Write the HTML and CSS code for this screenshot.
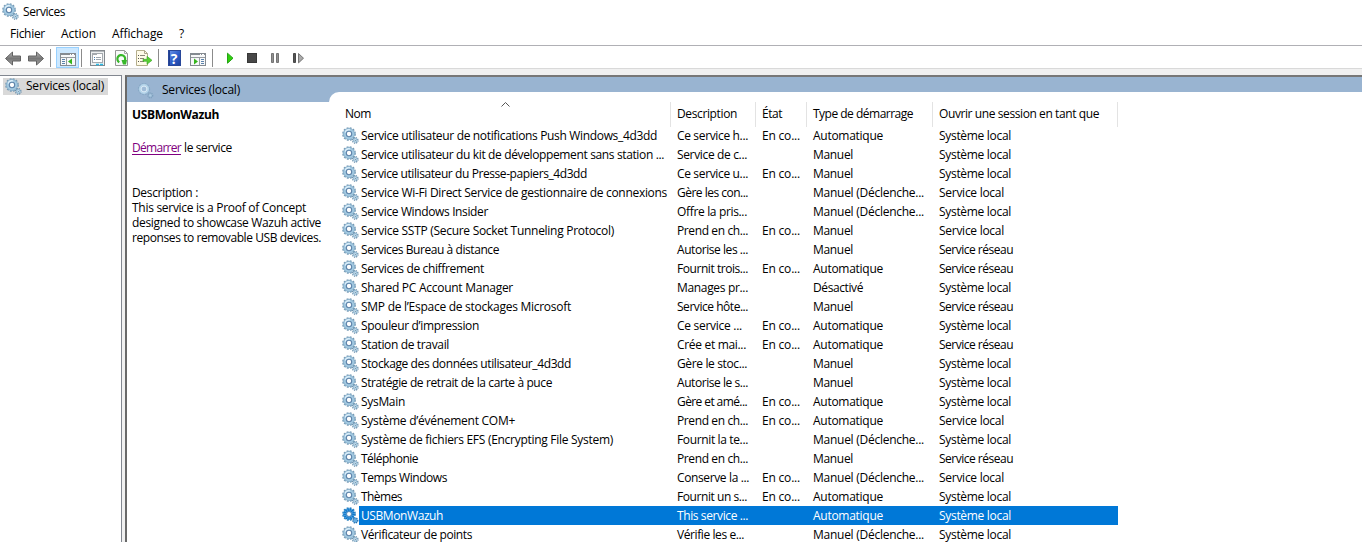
FILE: index.html
```html
<!DOCTYPE html>
<html lang="fr">
<head>
<meta charset="utf-8">
<title>Services</title>
<link rel="stylesheet" href="styles.css">
</head>
<body>
<svg class="defs" width="0" height="0">
  <defs>
    <linearGradient id="arrowFill" x1="0" y1="0" x2="0" y2="1"><stop offset="0" stop-color="#b5b5b5"/><stop offset=".5" stop-color="#777"/><stop offset="1" stop-color="#a5a5a5"/></linearGradient>
    <linearGradient id="helpFill" x1="0" y1="0" x2="1" y2="1"><stop offset="0" stop-color="#6f97e8"/><stop offset=".5" stop-color="#2f5fcb"/><stop offset="1" stop-color="#1c3f9c"/></linearGradient>
    <symbol id="gear" viewBox="0 0 17 17">
      <circle cx="7" cy="7" r="5.9" fill="none" stroke="#7398b3" stroke-width="1.9" stroke-dasharray="1.85 1.24"/>
      <circle cx="7" cy="7" r="4.2" fill="none" stroke="#a3cae2" stroke-width="3.2"/>
      <circle cx="7" cy="7" r="5.5" fill="none" stroke="#82a9c5" stroke-width=".7"/>
      <path d="M3.200 5.500A4.100 4.100 0 0 1 8 3" fill="none" stroke="#dceffa" stroke-width="1.400"/>
      <circle cx="7" cy="7" r="2.700" fill="#fff" stroke="#5f84aa" stroke-width="1.100"/>
      <circle cx="13.300" cy="13.400" r="2.700" fill="none" stroke="#668ba8" stroke-width="1.400" stroke-dasharray="1.200 .92"/>
      <circle cx="13.300" cy="13.400" r="1.700" fill="#eef7fc" stroke="#91b9d3" stroke-width="1.200"/>
      <circle cx="13.300" cy="13.400" r=".6" fill="#6388a5"/>
    </symbol>
    <symbol id="gearpale" viewBox="0 0 17 17">
      <circle cx="7" cy="7" r="5.400" fill="none" stroke="#86a9c6" stroke-width="1.500" stroke-dasharray="1.600 1.230"/>
      <circle cx="7" cy="7" r="4" fill="none" stroke="#b5d5ea" stroke-width="2"/>
      <circle cx="7" cy="7" r="2.900" fill="#9fbbd7" stroke="#e3f2fb" stroke-width=".9"/>
      <circle cx="13.300" cy="13.400" r="2.300" fill="none" stroke="#7fa2bf" stroke-width="1.500" stroke-dasharray="1.100 .7"/>
      <circle cx="13.300" cy="13.400" r="1.200" fill="#a9cbe2"/>
    </symbol>
    <symbol id="gearsel" viewBox="0 0 17 17">
      <circle cx="7" cy="7" r="5.900" fill="none" stroke="#287fbd" stroke-width="1.900" stroke-dasharray="1.850 1.240"/>
      <circle cx="7" cy="7" r="4.200" fill="none" stroke="#4b9fdd" stroke-width="3.200"/>
      <circle cx="7" cy="7" r="4.200" fill="none" stroke="#0873c9" stroke-width="3" stroke-dasharray="1 1"/>
      <circle cx="7" cy="7" r="2.500" fill="#fff" stroke="#226cad" stroke-width=".8"/>
      <circle cx="13.300" cy="13.400" r="2.500" fill="#65ace0" stroke="#216eae" stroke-width="1.300" stroke-dasharray="1.200 .9"/>
    </symbol>
  </defs>
</svg>
<div class="window">
  <header class="titlebar"><svg class="gear"><use href="#gear"/></svg><span data-w="42">Services</span></header>
  <nav class="menu">
    <span class="m1" data-w="35">Fichier</span><span class="m2" data-w="35">Action</span><span class="m3" data-w="51">Affichage</span><span>?</span>
  </nav>
  <div class="toolbar">
    <svg width="362" height="22" viewBox="0 46 362 22">
      <g fill="url(#arrowFill)" stroke="#626262" stroke-width="1" stroke-linejoin="round">
        <path d="M5.500 58.500l7-6.500v4h8v5h-8v4z"/><path d="M43.500 58.500l-7-6.500v4h-8v5h8v4z"/>
      </g>
      <path d="M50.500 49v18M81.500 49v18M158.500 49v18M212.500 49v18" stroke="#8b8b8b"/>
      <rect x="56.500" y="47.500" width="22" height="20" fill="#cce8ff" stroke="#99d1ff"/>
      <g>
        <rect x="60.500" y="53.500" width="15" height="12" fill="#f7f8f9" stroke="#858b91"/>
        <path d="M61 54.500h14" stroke="#858b91"/><path d="M70 54.500h1M72 54.500h2" stroke="#fff"/>
        <path d="M61 57.500h14M66.500 58v7" stroke="#969ba0"/>
        <path d="M62 59.500h3M62 61.500h3M62 63.500h3" stroke="#5c83ac"/><path d="M72 58.500v6l-4-3z" fill="#35b51c"/>
      </g>
      <g>
        <rect x="90.500" y="50.500" width="14" height="15" fill="#eef0f1" stroke="#84898e"/>
        <path d="M91 51.500h13" stroke="#b3b8bc"/>
        <rect x="92.500" y="53.500" width="10" height="9" fill="#fff" stroke="#a4a9ae"/>
        <path d="M93 54.500h4" stroke="#a4a9ae"/>
        <path d="M94 57.500h1M94 59.500h1" stroke="#4a7eb0"/><path d="M96 57.500h5M96 59.500h5" stroke="#a0a8b0"/>
        <path d="M96 64.500h3M100 64.500h3" stroke="#2bbce8" stroke-width="1.500"/>
      </g>
      <g>
        <path d="M115.500 50.500h9l3 3v12h-12z" fill="#f9fafa" stroke="#969696"/><path d="M124.500 50.500v3h3" fill="none" stroke="#aaa"/>
        <path d="M119.300 62.300A3.900 3.900 0 1 1 124.600 61" fill="none" stroke="#38b72a" stroke-width="2.200"/><path d="M121.500 60h5.500l-1 4.500h-3z" fill="#38b72a"/>
      </g>
      <g>
        <path d="M136.500 50.500h8l3 3v12h-11z" fill="#fffbe8" stroke="#b5ae8c"/><path d="M144.500 50.500v3h3" fill="none" stroke="#aaa38a"/>
        <path d="M138 55.500h1M138 58.500h1M138 61.500h1" stroke="#555"/><path d="M140 55.500h5M140 58.500h4M140 61.500h4" stroke="#8a8778"/>
        <path d="M143 59.300h4v-3l5 4-5 4v-3h-4z" fill="#58cf32" stroke="#37a325" stroke-width=".6"/>
      </g>
      <rect x="168.500" y="50.500" width="12" height="15" fill="url(#helpFill)" stroke="#28479a"/>
      <path d="M169.500 51v14" stroke="#1f3f92"/>
      <text x="170.700" y="63.500" class="help">?</text>
      <g>
        <rect x="190.500" y="53.500" width="15" height="12" fill="#f7f8f9" stroke="#858b91"/>
        <path d="M191 54.500h14" stroke="#858b91"/><path d="M200 54.500h1M202 54.500h2" stroke="#fff"/>
        <path d="M191 57.500h14M199.500 58v7" stroke="#969ba0"/>
        <path d="M201 59.500h3M201 61.500h3M201 63.500h3" stroke="#5c83ac"/><path d="M194 58.500v6l4-3z" fill="#35b51c"/>
      </g>
      <path d="M227.500 53.200l5.500 5-5.500 5z" fill="#2fd00d" stroke="#26a316"/>
      <rect x="247.500" y="53.500" width="9" height="9" fill="#474747" stroke="#383838"/>
      <path d="M271.500 53.500h2v9h-2zM276.500 53.500h2v9h-2z" fill="#909090" stroke="#747474"/>
      <path d="M293.500 53.500h2v9h-2z" fill="#555" stroke="#484848"/><path d="M298.500 53.500l5 4.700-5 4.700z" fill="#aaa" stroke="#777"/>
    </svg>
  </div>
  <div class="body">
    <aside class="tree"><div class="node"><svg class="gear"><use href="#gear"/></svg><span data-w="78">Services (local)</span></div></aside>
    <main class="pane">
      <section class="info">
        <div class="banner"><svg class="gear"><use href="#gearpale"/></svg><span data-w="78">Services (local)</span></div>
        <div class="details">
          <h1><span data-w="87">USBMonWazuh</span></h1>
          <p class="action"><a href="#" data-w="49">Démarrer</a><span data-w="48">le service</span></p>
          <p class="desc"><span data-w="66">Description :</span><span data-w="174">This service is a Proof of Concept</span><span data-w="189">designed to showcase Wazuh active</span><span data-w="189">reponses to removable USB devices.</span></p>
        </div>
      </section>
      <section class="list">
        <div class="head">
          <div><span data-w="26">Nom</span><svg class="sort" width="9" height="5"><path d="M.5 4.500l4-4 4 4" fill="none" stroke="#555"/></svg></div>
          <div><span data-w="60">Description</span></div><div><span data-w="20">État</span></div><div><span data-w="100">Type de démarrage</span></div><div><span data-w="160">Ouvrir une session en tant que</span></div>
        </div>
        <div id="rows"></div>
      </section>
    </main>
  </div>
</div>
<script src="script.js"></script>
</body>
</html>
```
FILE: styles.css
```css
* { box-sizing: border-box; }
body { margin: 0; background: #fff; color: #000; font: 12px/15px "Open Sans", "Noto Sans", sans-serif; overflow: hidden; }
.defs { position: absolute; }
.window { height: 542px; display: flex; flex-direction: column; overflow: hidden; }
span, a { white-space: pre; }
.gear { width: 17px; height: 17px; flex: none; }
.titlebar { height: 24px; padding: 3px 0 0 2px; display: flex; gap: 4px; }
.titlebar span { padding-top: 1px; }
.menu { height: 22px; display: flex; padding: 2px 0 0 10px; border-bottom: 1px solid #b0b0b5; }
.m1 { margin-right: 16px; }
.m2 { margin-right: 16px; }
.m3 { margin-right: 16px; }
.toolbar { height: 23px; border-bottom: 1px solid #d9d9d9; flex: none; }
.toolbar svg { display: block; }
.help { font: bold 14px "Open Sans", sans-serif; fill: #fff; }
.body { flex: 1; min-height: 0; background: #f0f0f0; padding-top: 6px; display: flex; gap: 3px; }
.tree { width: 122px; background: #fff; border: solid #828790; border-width: 1px 1px 0 0; padding: 2px 0 0 3px; }
.node { width: 105px; height: 17px; background: #d9d9d9; display: flex; gap: 4px; padding-left: 2px; }
.pane { flex: 1; display: flex; background: #99b4d1; border: solid #696969; border-width: 2px 0 0 2px; border-top-color: #777; }
.info { width: 202px; display: flex; flex-direction: column; }
.banner { height: 25px; display: flex; padding: 5px 0 0 10px; gap: 8px; }
.details { flex: 1; background: #fff; padding: 5px 0 0 5px; }
h1 { font-size: 12px; line-height: 15px; margin: 0 0 18px; }
p { margin: 0; }
.action { display: flex; gap: 3px; margin-bottom: 30px; }
a { color: #800080; text-underline-offset: 2px; }
.desc { display: flex; flex-direction: column; align-items: flex-start; }
.list { flex: 1; min-width: 0; margin-top: 15px; background: #fff; border-top-left-radius: 10px; padding-left: 12px; }
.head { height: 34px; display: grid; grid-template-columns: 330px 85px 51px 126px 185px; padding-top: 10px; }
.head div { border-right: 1px solid #e3e3e3; padding: 4px 0 0 6px; height: 25px; }
.head div:first-child { padding-left: 4px; display: flex; gap: 130px; }
.sort { margin-top: -4px; }
.row { height: 19px; display: grid; grid-template-columns: 18px 312px 85px 51px 126px 185px; width: 777px; align-items: start; }
.row .gear { margin: 1px 0 0 1px; }
.cell { padding: 2px 0 0 6px; height: 19px; }
.cell.name { padding-left: 2px; }
.row.selected .cell { background: #0078d7; color: #fff; }
```
FILE: script.js
```js
const AUTO = "Automatique", MAN = "Manuel", TRIG = "Manuel (Déclenche...";
const SYS = "Système local", LOC = "Service local", NET = "Service réseau";
const widths = { [AUTO]: 70, [MAN]: 40, [TRIG]: 111, "Désactivé": 50, [SYS]: 72, [LOC]: 65, [NET]: 74, "En co...": 38 };
// name, name width, description, description width, running, startup type, account
const rows = [
  ["Service utilisateur de notifications Push Windows_4d3dd", 296, "Ce service h...", 71, 1, AUTO, SYS],
  ["Service utilisateur du kit de développement sans station ...", 303, "Service de c...", 70, 0, MAN, SYS],
  ["Service utilisateur du Presse-papiers_4d3dd", 226, "Ce service u...", 71, 1, MAN, SYS],
  ["Service Wi-Fi Direct Service de gestionnaire de connexions", 306, "Gère les con...", 71, 0, TRIG, LOC],
  ["Service Windows Insider", 127, "Offre la pris...", 70, 0, TRIG, SYS],
  ["Service SSTP (Secure Socket Tunneling Protocol)", 253, "Prend en ch...", 71, 1, MAN, LOC],
  ["Services Bureau à distance", 138, "Autorise les ...", 71, 0, MAN, NET],
  ["Services de chiffrement", 123, "Fournit trois...", 71, 1, AUTO, NET],
  ["Shared PC Account Manager", 152, "Manages pr...", 71, 0, "Désactivé", SYS],
  ["SMP de l’Espace de stockages Microsoft", 210, "Service hôte...", 71, 0, MAN, NET],
  ["Spouleur d’impression", 118, "Ce service ...", 65, 1, AUTO, SYS],
  ["Station de travail", 88, "Crée et mai...", 69, 1, AUTO, NET],
  ["Stockage des données utilisateur_4d3dd", 210, "Gère le stoc...", 70, 0, MAN, SYS],
  ["Stratégie de retrait de la carte à puce", 191, "Autorise le s...", 71, 0, MAN, SYS],
  ["SysMain", 44, "Gère et amé...", 70, 1, AUTO, SYS],
  ["Système d’événement COM+", 154, "Prend en ch...", 71, 1, AUTO, LOC],
  ["Système de fichiers EFS (Encrypting File System)", 252, "Fournit la te...", 71, 0, TRIG, SYS],
  ["Téléphonie", 57, "Prend en ch...", 71, 0, MAN, NET],
  ["Temps Windows", 86, "Conserve la ...", 72, 1, TRIG, LOC],
  ["Thèmes", 41, "Fournit un s...", 70, 1, AUTO, SYS],
  ["USBMonWazuh", 82, "This service ...", 71, 0, AUTO, SYS],
  ["Vérificateur de points", 111, "Vérifie les e...", 67, 0, TRIG, SYS]
];
const cell = (text, w, cls = "") => `<div class="cell ${cls}">${text ? `<span data-w="${w}">${text}</span>` : ""}</div>`;
document.getElementById("rows").innerHTML = rows.map(([n, nw, d, dw, on, type, account]) => {
  const selected = n === "USBMonWazuh";
  return `<div class="row${selected ? " selected" : ""}"><svg class="gear"><use href="#${selected ? "gearsel" : "gear"}"/></svg>` +
    cell(n, nw, "name") + cell(d, dw) + cell(on ? "En co..." : "", 38) + cell(type, widths[type]) + cell(account, widths[account]) + "</div>";
}).join("");
document.querySelectorAll("[data-w]").forEach(el => {
  const extra = (Number(el.dataset.w) - el.getBoundingClientRect().width) / el.textContent.length;
  el.style.letterSpacing = extra.toFixed(3) + "px";
});
```
